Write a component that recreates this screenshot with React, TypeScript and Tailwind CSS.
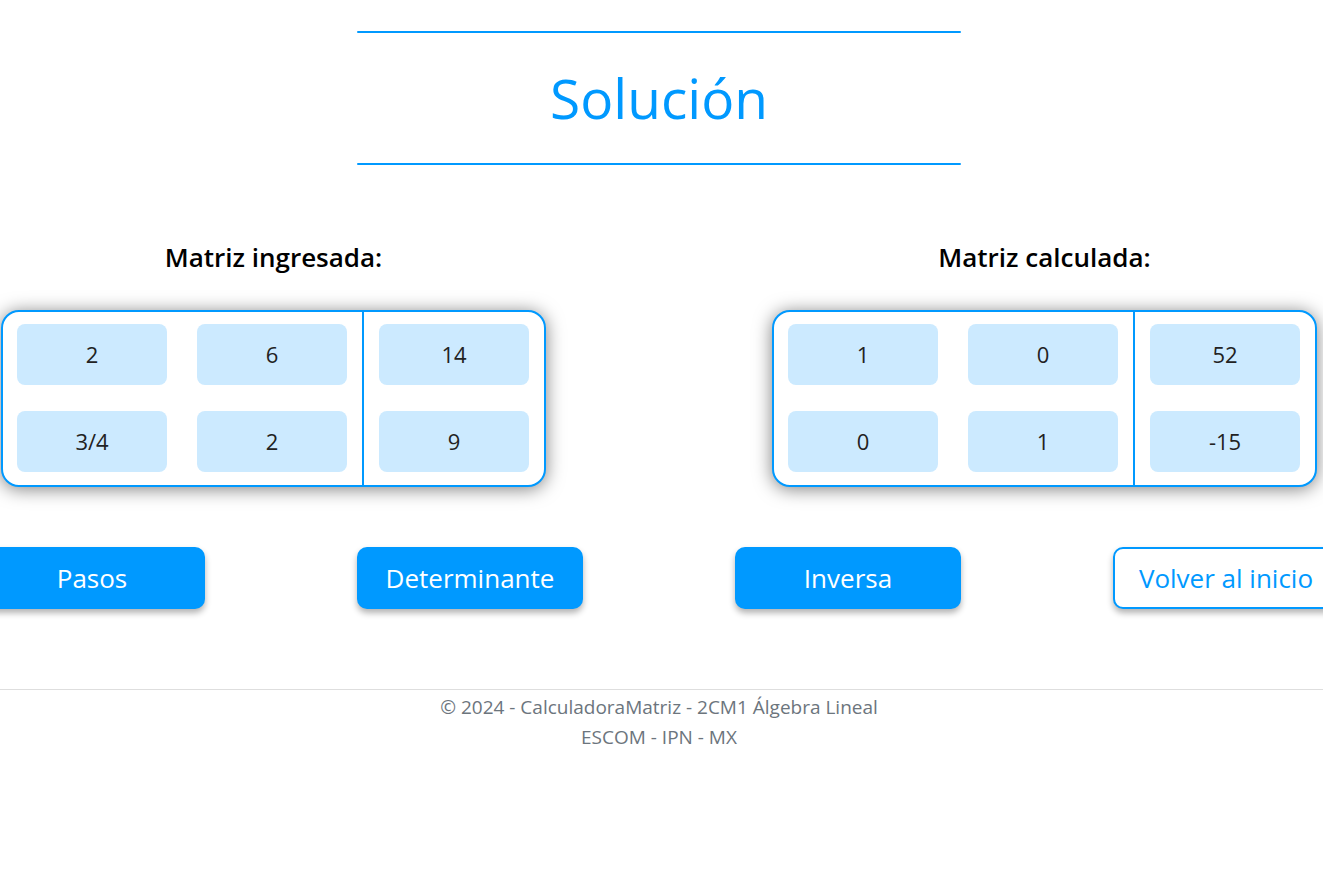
import React from "react";

const comic = "[font-family:'Comic_Sans_MS','Open_Sans',sans-serif]";

const ingresada = [
  ["2", "6", "14"],
  ["3/4", "2", "9"],
];

const calculada = [
  ["1", "0", "52"],
  ["0", "1", "-15"],
];

const Cell = ({ value }: { value: string }) => (
  <div className="w-[150px] h-[61px] rounded-lg bg-[#cceaff] flex items-center justify-center text-[22px] text-[#222]">
    {value}
  </div>
);

const MatrixCard = ({ title, rows }: { title: string; rows: string[][] }) => (
  <div className="flex flex-col items-center w-[545px]">
    <h3 className={`${comic} text-[26px] leading-8 font-semibold text-black`}>{title}</h3>
    <div className={`${comic} mt-[37px] flex w-full rounded-[18px] border-2 border-[#0099ff] bg-white shadow-[0_2px_18px_rgba(0,0,0,0.5)]`}>
      <div className="grid grid-cols-2 gap-x-[30px] gap-y-[26px] pl-[14px] pr-[15px] pt-[12px] pb-[13px]">
        {rows.map((r) => r.slice(0, 2).map((v, i) => <Cell key={`${r.join()}-${i}`} value={v} />))}
      </div>
      <div className="flex flex-col gap-y-[26px] border-l-2 border-[#0099ff] px-[15px] pt-[12px] pb-[13px]">
        {rows.map((r, i) => (
          <Cell key={i} value={r[2]} />
        ))}
      </div>
    </div>
  </div>
);

const buttons = [
  { label: "Pasos", outline: false },
  { label: "Determinante", outline: false },
  { label: "Inversa", outline: false },
  { label: "Volver al inicio", outline: true },
];

export default function App() {
  return (
    <div className="w-full min-h-screen bg-white overflow-hidden">
      <div className="w-[1512px] ml-[-97px] flex flex-col">
        <header className="w-[604px] mx-auto mt-[31px] flex flex-col">
          <div className="h-[2px] rounded-full bg-[#0099ff]" />
          <h1 className={`${comic} h-[130px] flex items-center justify-center text-[55px] text-[#0099ff] font-normal`}>
            Solución
          </h1>
          <div className="h-[2px] rounded-full bg-[#0099ff]" />
        </header>

        <section className="mt-[76px] flex justify-center gap-[226px]">
          <MatrixCard title="Matriz ingresada:" rows={ingresada} />
          <MatrixCard title="Matriz calculada:" rows={calculada} />
        </section>

        <section className="mt-[60px] grid grid-cols-4">
          {buttons.map((b) => (
            <div key={b.label} className="flex justify-center">
              <button
                className={`${comic} w-[226px] h-[62px] rounded-[10px] text-[26px] font-medium shadow-[0_4px_6px_rgba(0,0,0,0.3)] ${
                  b.outline ? "bg-white border-2 border-[#0099ff] text-[#0099ff]" : "bg-[#0099ff] text-white"
                }`}
              >
                {b.label}
              </button>
            </div>
          ))}
        </section>

        <footer className="mt-[80px] pt-[2px] border-t border-[#dedede] flex flex-col items-center [font-family:'Open_Sans',sans-serif] text-[19px] leading-[30px] text-[#6c757d]">
          <p>© 2024 - CalculadoraMatriz - 2CM1 Álgebra Lineal</p>
          <p>ESCOM - IPN - MX</p>
        </footer>
      </div>
    </div>
  );
}
